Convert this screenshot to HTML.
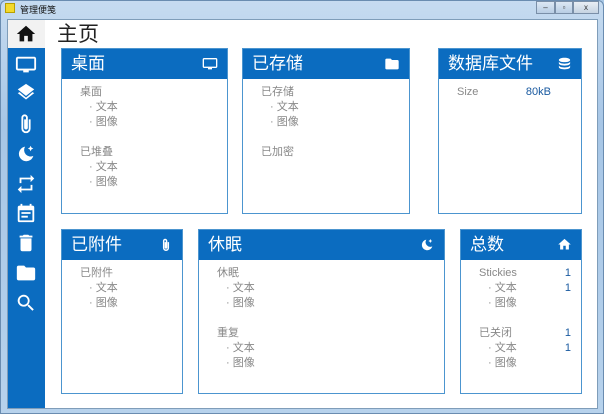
<!DOCTYPE html><html><head><meta charset="utf-8"><style>
*{margin:0;padding:0;box-sizing:border-box}
body{width:604px;height:414px;overflow:hidden;background:#a9c8e6;font-family:"Liberation Sans","Noto Sans CJK SC",sans-serif;position:relative}
.frame{position:absolute;left:0;top:0;width:604px;height:414px;background:linear-gradient(#c6dbf0,#a7c6e6 30%,#b7d2ec);border:1px solid #6a8cb0;border-radius:6px 6px 0 0}
.title{position:absolute;left:20px;top:3px;font-size:9px;color:#111}
.client{position:absolute;left:7px;top:19px;width:591px;height:390px;background:#fff;border:1px solid #7f9db9}
.side{position:absolute;left:8px;top:20px;width:37px;height:388px;background:#0b6cc0}
.homeb{position:absolute;left:8px;top:20px;width:37px;height:28px;background:#f2f2f2}
.ic{position:absolute;left:15px;width:22px;height:22px}
h1{position:absolute;left:57px;top:18px;font-size:21px;font-weight:normal;color:#222}
.card{position:absolute;border:1px solid #4c95cf;background:#fff}
.hd{height:30px;background:#0b6cc0;color:#fff;font-size:17px;line-height:30px;padding-left:9px;position:relative}
.hd svg{position:absolute;right:9px;top:7px}
.bd{font-size:11px;color:#888;padding:6px 0 0 18px;line-height:15px;position:relative}
.i{padding-left:9px}
.g{height:15px}
.n{position:absolute;right:10px;color:#1a5aa0}
.btn{position:absolute;top:1px;height:13px;border:1px solid #7a8fa8;background:linear-gradient(#dde8f4,#b8cde4);font-size:8px;text-align:center;line-height:11px;color:#333}
</style></head><body>
<div class="frame"></div>
<div style="position:absolute;left:5px;top:3px;width:10px;height:10px;background:#f3d92c;border:1px solid #b9a000"></div>
<div class="title">管理便笺</div>
<div class="btn" style="left:536px;width:19px">–</div>
<div class="btn" style="left:555px;width:18px">▫</div>
<div class="btn" style="left:573px;width:26px;background:linear-gradient(#e9eef4,#c5d3e2)">x</div>
<div class="client"></div>
<div class="side"></div>
<div class="homeb"></div>
<svg class="ic" style="top:23px" viewBox="0 0 24 24"><path fill="#111" d="M10 20v-6h4v6h5v-8h3L12 3 2 12h3v8z"/></svg>
<svg class="ic" style="top:54px" viewBox="0 0 24 24"><path fill="#fff" d="M21 3H3c-1 0-2 1-2 2v11c0 1 1 2 2 2h6v2h6v-2h6c1 0 2-1 2-2V5c0-1-1-2-2-2zm0 13H3V5h18z"/></svg>
<svg class="ic" style="top:83px" viewBox="0 0 24 24"><path fill="#fff" d="M12 16l7-6 2 1-9 7-9-7 2-1zm0-2L3 7l9-6 9 6z"/></svg>
<svg class="ic" style="top:113px" viewBox="0 0 24 24"><path fill="none" stroke="#fff" stroke-width="2" d="M16 7v10a4 4 0 0 1-8 0V5a2.5 2.5 0 0 1 5 0v11a1 1 0 0 1-2 0V7"/></svg>
<svg class="ic" style="top:143px" viewBox="0 0 24 24"><path fill="#fff" d="M11 4a8 8 0 1 0 9 10 7 7 0 0 1-9-10z"/><path fill="#fff" d="M17 3l1 2 2 1-2 1-1 2-1-2-2-1 2-1z"/></svg>
<svg class="ic" style="top:173px" viewBox="0 0 24 24"><path fill="#fff" d="M7 7h10v3l4-4-4-4v3H5v6h2zm10 10H7v-3l-4 4 4 4v-3h12v-6h-2z"/></svg>
<svg class="ic" style="top:202px" viewBox="0 0 24 24"><path fill="#fff" d="M19 4h-1V2h-2v2H8V2H6v2H5a2 2 0 0 0-2 2v14a2 2 0 0 0 2 2h14a2 2 0 0 0 2-2V6a2 2 0 0 0-2-2zm0 16H5V9h14zM7 11h10v2H7zm0 4h7v2H7z"/></svg>
<svg class="ic" style="top:232px" viewBox="0 0 24 24"><path fill="#fff" d="M6 19a2 2 0 0 0 2 2h8a2 2 0 0 0 2-2V7H6zM19 4h-3.5l-1-1h-5l-1 1H5v2h14z"/></svg>
<svg class="ic" style="top:262px" viewBox="0 0 24 24"><path fill="#fff" d="M10 4H4a2 2 0 0 0-2 2v12a2 2 0 0 0 2 2h16a2 2 0 0 0 2-2V8a2 2 0 0 0-2-2h-8z"/></svg>
<svg class="ic" style="top:292px" viewBox="0 0 24 24"><path fill="#fff" d="M15.5 14h-.8l-.3-.3A6.5 6.5 0 1 0 9.5 16a6.5 6.5 0 0 0 4.2-1.6l.3.3v.8l5 5 1.5-1.5zm-6 0a4.5 4.5 0 1 1 0-9 4.5 4.5 0 0 1 0 9z"/></svg>
<h1>主页</h1>

<div class="card" style="left:61px;top:48px;width:167px;height:166px">
<div class="hd">桌面<svg width="16" height="16" viewBox="0 0 24 24"><path fill="#fff" d="M21 3H3c-1 0-2 1-2 2v11c0 1 1 2 2 2h6v2h6v-2h6c1 0 2-1 2-2V5c0-1-1-2-2-2zm0 13H3V5h18z"/></svg></div>
<div class="bd">桌面<div class="i">· 文本</div><div class="i">· 图像</div><div class="g"></div>已堆叠<div class="i">· 文本</div><div class="i">· 图像</div></div></div>

<div class="card" style="left:242px;top:48px;width:168px;height:166px">
<div class="hd">已存储<svg width="16" height="16" viewBox="0 0 24 24"><path fill="#fff" d="M10 4H4a2 2 0 0 0-2 2v12a2 2 0 0 0 2 2h16a2 2 0 0 0 2-2V8a2 2 0 0 0-2-2h-8z"/></svg></div>
<div class="bd">已存储<div class="i">· 文本</div><div class="i">· 图像</div><div class="g"></div>已加密</div></div>

<div class="card" style="left:438px;top:48px;width:144px;height:166px">
<div class="hd">数据库文件<svg width="15" height="16" viewBox="0 0 24 24"><path fill="#fff" d="M12 2C7 2 3 3.5 3 5.5S7 9 12 9s9-1.5 9-3.5S17 2 12 2zM3 8v3c0 2 4 3.5 9 3.5s9-1.5 9-3.5V8c0 2-4 3.5-9 3.5S3 10 3 8zm0 6v3c0 2 4 3.5 9 3.5s9-1.5 9-3.5v-3c0 2-4 3.5-9 3.5S3 16 3 14z"/></svg></div>
<div class="bd">Size<span class="n" style="right:30px">80kB</span></div></div>

<div class="card" style="left:61px;top:229px;width:122px;height:165px">
<div class="hd">已附件<svg width="14" height="16" viewBox="0 0 24 24"><path fill="none" stroke="#fff" stroke-width="2.5" d="M16 7v10a4 4 0 0 1-8 0V5a2.5 2.5 0 0 1 5 0v11a1 1 0 0 1-2 0V7"/></svg></div>
<div class="bd">已附件<div class="i">· 文本</div><div class="i">· 图像</div></div></div>

<div class="card" style="left:198px;top:229px;width:247px;height:165px">
<div class="hd">休眠<svg width="16" height="16" viewBox="0 0 24 24"><path fill="#fff" d="M11 4a8 8 0 1 0 9 10 7 7 0 0 1-9-10z"/><path fill="#fff" d="M17 3l1 2 2 1-2 1-1 2-1-2-2-1 2-1z"/></svg></div>
<div class="bd">休眠<div class="i">· 文本</div><div class="i">· 图像</div><div class="g"></div>重复<div class="i">· 文本</div><div class="i">· 图像</div></div></div>

<div class="card" style="left:460px;top:229px;width:122px;height:165px">
<div class="hd">总数<svg width="15" height="15" viewBox="0 0 24 24"><path fill="#fff" d="M10 20v-6h4v6h5v-8h3L12 3 2 12h3v8z"/></svg></div>
<div class="bd">Stickies<span class="n">1</span><div class="i">· 文本<span class="n">1</span></div><div class="i">· 图像</div><div class="g"></div>已关闭<span class="n">1</span><div class="i">· 文本<span class="n">1</span></div><div class="i">· 图像</div></div></div>
</body></html>
